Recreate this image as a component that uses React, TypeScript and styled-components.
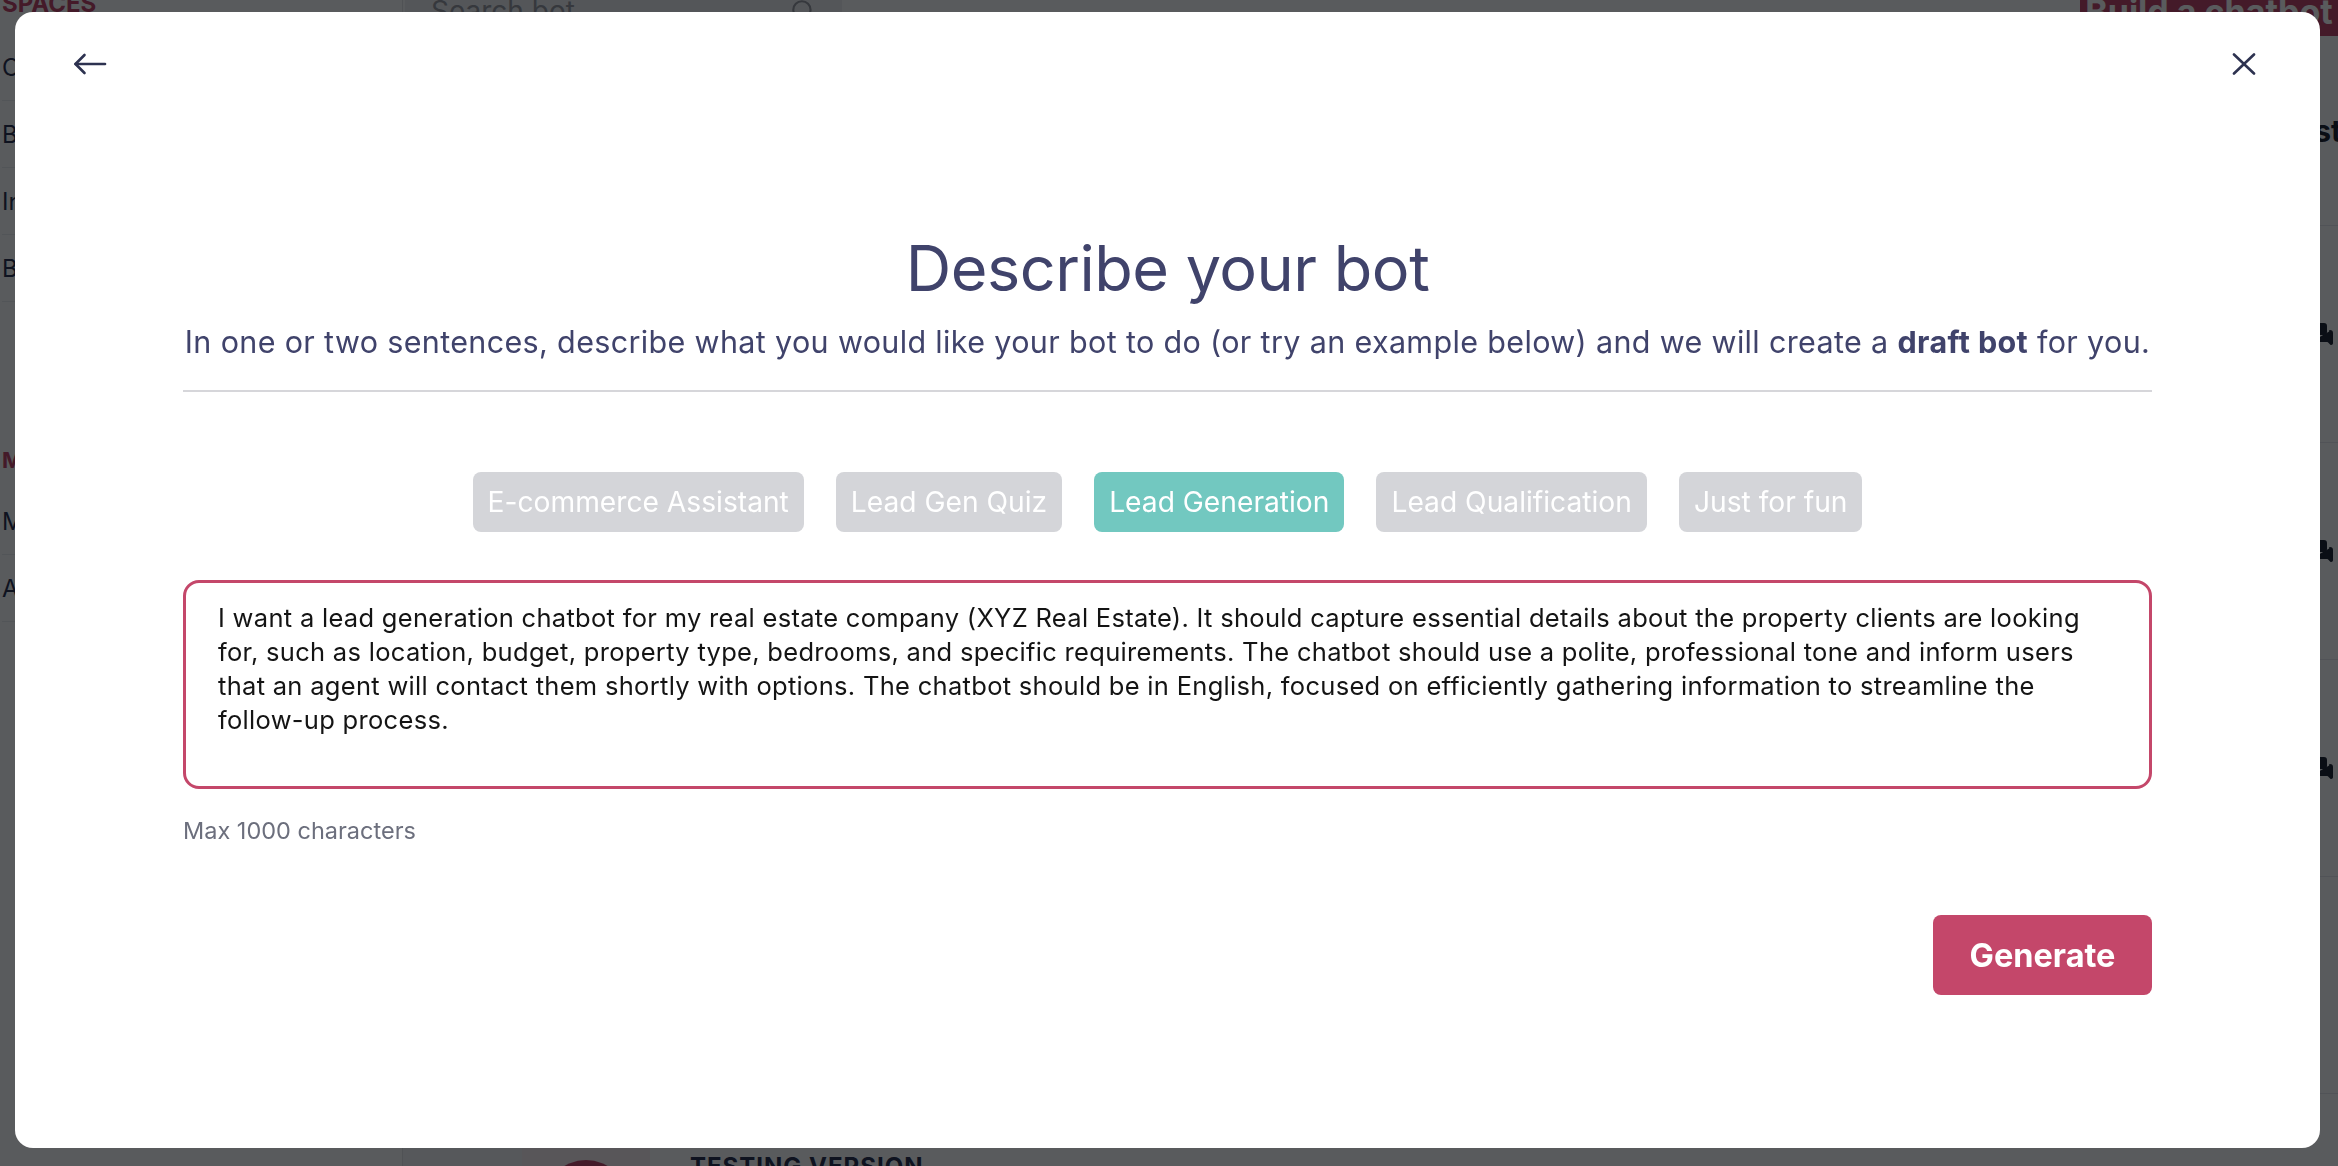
import React, { useState } from 'react';
import styled, { createGlobalStyle } from 'styled-components';
import { Search, MessagesSquare } from 'lucide-react';

const GlobalStyle = createGlobalStyle`
  * { box-sizing: border-box; }
  html, body { margin: 0; padding: 0; }
  body {
    font-family: Inter, 'Noto Sans', Arial, sans-serif;
    background: #ffffff;
    overflow: hidden;
  }
`;

const EXAMPLES = [
  'E-commerce Assistant',
  'Lead Gen Quiz',
  'Lead Generation',
  'Lead Qualification',
  'Just for fun',
];

const PROMPT = [
  'I want a lead generation chatbot for my real estate company (XYZ Real Estate). It should capture essential details about the property clients are looking',
  'for, such as location, budget, property type, bedrooms, and specific requirements. The chatbot should use a polite, professional tone and inform users',
  'that an agent will contact them shortly with options. The chatbot should be in English, focused on efficiently gathering information to streamline the',
  'follow-up process.',
].join('\n');

const SIDEBAR_ITEMS = ['Overview', 'Bots', 'Inbox', 'Broadcasts'];

// rows of the bot list behind the dialog
const ROWS = [
  { id: 1, chats: true, tag: '' },
  { id: 2, chats: true, tag: '' },
  { id: 3, chats: true, tag: '' },
  { id: 4, chats: false, tag: '' },
  { id: 5, chats: false, tag: 'TESTING VERSION' },
];

const BackIcon = () => (
  <svg width="34" height="22" viewBox="0 0 34 22" fill="none" stroke="#2d3250" strokeWidth="2.6" strokeLinecap="round" strokeLinejoin="round">
    <path d="M32 11H2.5" />
    <path d="M11.5 2 2.5 11l9 9" />
  </svg>
);

const CloseIcon = () => (
  <svg width="24" height="22" viewBox="0 0 24 22" fill="none" stroke="#2d3250" strokeWidth="2.6" strokeLinecap="round">
    <path d="M2 1.5 22 20.5" />
    <path d="M22 1.5 2 20.5" />
  </svg>
);

const App = () => {
  const [active, setActive] = useState(2);
  const [prompt, setPrompt] = useState(PROMPT);

  return (
    <>
      <GlobalStyle />
      <Page>
        <Sidebar>
          <SidebarTitle>SPACES</SidebarTitle>
          {SIDEBAR_ITEMS.map((item) => (
            <SidebarItem key={item}>{item}</SidebarItem>
          ))}
          <SidebarSection>My spaces</SidebarSection>
          <SidebarItem>Mailing</SidebarItem>
          <SidebarItem>Agency</SidebarItem>
        </Sidebar>

        <Main>
          <TopBar>
            <SearchBox>
              Search bot...
              <Search size={26} color="#9a9ca3" />
            </SearchBox>
            <BuildButton>Build a chatbot</BuildButton>
          </TopBar>
          <ListHeader>
            <SortLabel>Latest</SortLabel>
          </ListHeader>
          {ROWS.map((row) => (
            <BotRow key={row.id}>
              <RowCell />
              <AvatarCell>
                <Avatar />
              </AvatarCell>
              <BotInfo>{row.tag && <BotTag>{row.tag}</BotTag>}</BotInfo>
              <RowIcon>{row.chats && <MessagesSquare size={24} fill="#1f2433" color="#1f2433" />}</RowIcon>
            </BotRow>
          ))}
        </Main>

        <Overlay />

        <Modal>
          <ModalHeader>
            <IconButton aria-label="Back">
              <BackIcon />
            </IconButton>
            <IconButton aria-label="Close">
              <CloseIcon />
            </IconButton>
          </ModalHeader>

          <ModalBody>
            <Title>Describe your bot</Title>
            <Subtitle>
              In one or two sentences, describe what you would like your bot to do (or try an example below) and we will
              create a <strong>draft bot</strong> for you.
            </Subtitle>
            <Divider />

            <ChipRow>
              {EXAMPLES.map((label, i) => (
                <Chip key={label} $active={i === active} onClick={() => setActive(i)}>
                  {label}
                </Chip>
              ))}
            </ChipRow>

            <PromptInput value={prompt} onChange={(e) => setPrompt(e.target.value)} spellCheck={false} />
            <Hint>Max 1000 characters</Hint>

            <GenerateButton>Generate</GenerateButton>
          </ModalBody>
        </Modal>
      </Page>
    </>
  );
};

const Page = styled.div`
  display: flex;
  width: 100vw;
  height: 100vh;
  overflow: hidden;
  background: #ffffff;
`;

const Sidebar = styled.aside`
  width: 403px;
  flex-shrink: 0;
  display: flex;
  flex-direction: column;
  border-right: 1px solid #e4e5e9;
  padding-left: 2px;
`;

const SidebarTitle = styled.div`
  flex-shrink: 0;
  margin-top: -8px;
  height: 42px;
  color: #c4476a;
  font-weight: 700;
  font-size: 24px;
  line-height: 24px;
`;

const SidebarItem = styled.div`
  flex-shrink: 0;
  height: 67px;
  display: flex;
  align-items: center;
  font-size: 24px;
  color: #2d3250;
  border-bottom: 1px solid #eceef1;
`;

const SidebarSection = styled.div`
  flex-shrink: 0;
  margin-top: 130px;
  height: 56px;
  display: flex;
  align-items: center;
  color: #c4476a;
  font-weight: 700;
  font-size: 22px;
`;

const Main = styled.main`
  flex: 1;
  min-width: 0;
  display: flex;
  flex-direction: column;
`;

const TopBar = styled.div`
  flex-shrink: 0;
  height: 36px;
  display: flex;
  justify-content: space-between;
  align-items: stretch;
`;

const SearchBox = styled.div`
  width: 437px;
  margin-left: 2px;
  margin-top: -14px;
  padding: 0 26px;
  display: flex;
  align-items: center;
  justify-content: space-between;
  background: #f1f1f3;
  color: #9a9ca3;
  font-size: 28px;
`;

const BuildButton = styled.div`
  width: 258px;
  margin-top: -14px;
  display: flex;
  align-items: center;
  justify-content: center;
  background: #c4476a;
  color: #ffffff;
  font-weight: 700;
  font-size: 34px;
  white-space: nowrap;
`;

const ListHeader = styled.div`
  flex-shrink: 0;
  height: 190px;
  display: flex;
  align-items: center;
  justify-content: flex-end;
  font-weight: 700;
  font-size: 30px;
  color: #1f2433;
  border-bottom: 1px solid #e8e9ed;
`;

const SortLabel = styled.span`
  margin-right: -4px;
`;

const BotRow = styled.div`
  height: 217px;
  flex-shrink: 0;
  display: grid;
  grid-template-columns: 119px 128px 1fr 28px;
  border-bottom: 1px solid #e8e9ed;
`;

const RowCell = styled.div`
  background: #f7f7f9;
`;

const AvatarCell = styled.div`
  display: flex;
  align-items: center;
  justify-content: center;
  background: #fbeff3;
`;

const Avatar = styled.div`
  width: 84px;
  height: 84px;
  border-radius: 50%;
  background: #c4476a;
`;

const BotInfo = styled.div`
  padding: 58px 40px 0;
  display: flex;
  flex-direction: column;
`;

const BotTag = styled.span`
  font-size: 24px;
  font-weight: 700;
  color: #2d3250;
  letter-spacing: 1px;
`;

const RowIcon = styled.div`
  display: flex;
  align-items: center;
`;

const Overlay = styled.div`
  position: fixed;
  inset: 0;
  background: rgba(0, 3, 6, 0.65);
`;

const Modal = styled.div`
  position: fixed;
  top: 12px;
  left: 15px;
  right: 18px;
  bottom: 18px;
  background: #ffffff;
  border-radius: 18px;
  display: flex;
  flex-direction: column;
`;

const ModalHeader = styled.div`
  display: flex;
  justify-content: space-between;
  align-items: center;
  padding: 36px 64px 0 58px;
`;

const IconButton = styled.button`
  height: 32px;
  padding: 0;
  border: none;
  background: none;
  cursor: pointer;
  display: flex;
  align-items: center;
  justify-content: center;
`;

const ModalBody = styled.div`
  display: flex;
  flex-direction: column;
  align-items: center;
  padding: 0 168px;
`;

const Title = styled.h1`
  margin: 150px 0 0;
  font-size: 63px;
  line-height: 76px;
  font-weight: 400;
  color: #40436b;
  letter-spacing: -0.5px;
`;

const Subtitle = styled.p`
  margin: 16px 0 0;
  font-size: 30.5px;
  line-height: 40px;
  letter-spacing: 0.35px;
  color: #40436b;
  white-space: nowrap;

  strong {
    font-weight: 700;
  }
`;

const Divider = styled.hr`
  width: 100%;
  margin: 28px 0 0;
  border: none;
  border-top: 2px solid #d6d6da;
`;

const ChipRow = styled.div`
  margin-top: 80px;
  display: flex;
  gap: 32px;
`;

const Chip = styled.button<{ $active: boolean }>`
  height: 60px;
  padding: 0 15px;
  border: none;
  border-radius: 8px;
  background: ${(p) => (p.$active ? '#72c8c0' : '#d4d5d9')};
  color: #ffffff;
  font-family: inherit;
  font-size: 28.2px;
  cursor: pointer;
  white-space: nowrap;
`;

const PromptInput = styled.textarea`
  width: 100%;
  height: 209px;
  margin-top: 48px;
  padding: 18px 32px;
  border: 3px solid #c4476a;
  border-radius: 16px;
  font-family: inherit;
  font-size: 25.5px;
  letter-spacing: 0.3px;
  line-height: 34px;
  color: #141414;
  white-space: pre;
  overflow: hidden;
  resize: none;
  outline: none;
`;

const Hint = styled.div`
  align-self: flex-start;
  margin-top: 27px;
  font-size: 23.5px;
  line-height: 30px;
  color: #6c6f7d;
`;

const GenerateButton = styled.button`
  align-self: flex-end;
  margin-top: 69px;
  width: 219px;
  height: 80px;
  border: none;
  border-radius: 8px;
  background: #c4476a;
  color: #ffffff;
  font-family: inherit;
  font-weight: 700;
  font-size: 32.5px;
  cursor: pointer;
`;

export default App;
